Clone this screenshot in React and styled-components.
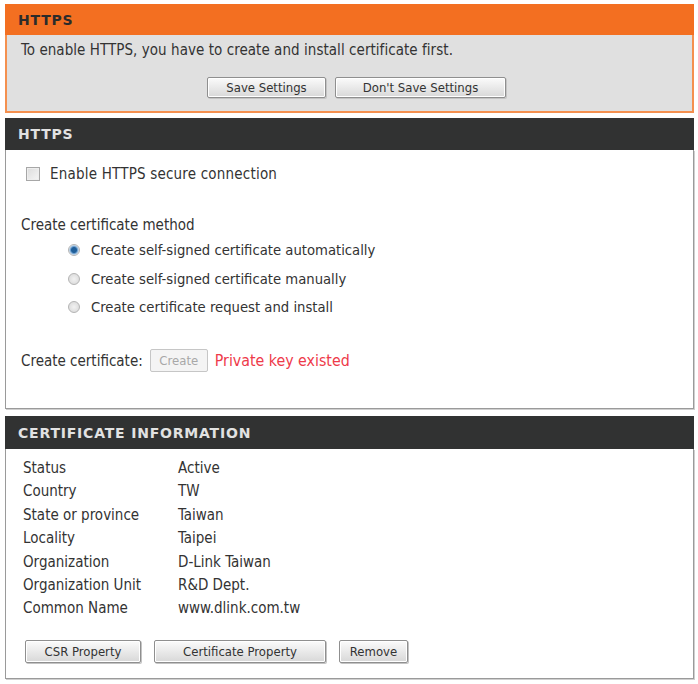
import React from "react";
import styled, { createGlobalStyle } from "styled-components";

const Global = createGlobalStyle`
  html, body { margin: 0; padding: 0; background: #ffffff; }
  body { font-family: "DejaVu Sans Condensed", "DejaVu Sans", Tahoma, sans-serif; color: #333; }
`;

const Page = styled.div`
  width: 698px;
  height: 684px;
  box-sizing: border-box;
  padding: 4px 4px 0 5px;
  display: flex;
  flex-direction: column;
  gap: 5px;
`;

const Panel = styled.section`
  display: flex;
  flex-direction: column;
  margin-top: ${(p) => p.$mt || 0}px;
`;

const Header = styled.div`
  height: ${(p) => p.$h || 32}px;
  box-sizing: border-box;
  display: flex;
  align-items: center;
  padding-left: 13px;
  background: ${(p) => (p.$orange ? "#f36f21" : "#313232")};
  color: ${(p) => (p.$orange ? "#2b2b2b" : "#e2e2e2")};
  font-family: "DejaVu Sans", Verdana, sans-serif;
  font-weight: bold;
  font-size: 14px;
  letter-spacing: 0.8px;
`;

const Body = styled.div`
  box-sizing: border-box;
  height: ${(p) => p.$h}px;
  background: ${(p) => (p.$orange ? "#e0e0e0" : "#ffffff")};
  border: ${(p) => (p.$orange ? "2px solid #f4904f" : "1px solid #9a9a9a")};
  border-top: none;
  box-shadow: ${(p) => (p.$orange ? "none" : "1px 1px 0 #cfcfcf")};
  display: flex;
  flex-direction: column;
  padding: ${(p) => p.$pad};
  font-size: 15px;
`;

const Line = styled.div`
  font-size: 15px;
  line-height: 18px;
  letter-spacing: ${(p) => p.$ls || 0}px;
  padding-left: ${(p) => p.$pl || 0}px;
  margin-top: ${(p) => p.$mt || 0}px;
  color: #333;
`;

const ButtonRow = styled.div`
  display: flex;
  gap: ${(p) => p.$gap || 9}px;
  justify-content: ${(p) => (p.$center ? "center" : "flex-start")};
  margin-top: ${(p) => p.$mt || 0}px;
  padding-left: ${(p) => p.$pl || 0}px;
`;

const Btn = styled.button`
  width: ${(p) => p.$w}px;
  height: ${(p) => p.$hh || 21}px;
  box-sizing: border-box;
  border: 1px solid #8f8f8f;
  border-radius: 2px;
  background: linear-gradient(#fbfbfb, #e6e6e6 60%, #d8d8d8);
  box-shadow: inset 0 0 0 1px #ffffff, 1px 1px 0 #c4c4c4;
  font-family: "DejaVu Sans Condensed", "DejaVu Sans", sans-serif;
  font-size: 13px;
  color: #333;
  padding: 0;
  cursor: pointer;
`;

const DisabledBtn = styled.button`
  width: 58px;
  height: 23px;
  box-sizing: border-box;
  border: 1px solid #c6c6c6;
  border-radius: 2px;
  background: #f4f4f4;
  color: #a8a8a8;
  font-family: "DejaVu Sans Condensed", "DejaVu Sans", sans-serif;
  font-size: 13px;
  padding: 0;
`;

const CheckRow = styled.label`
  display: flex;
  align-items: center;
  gap: 10px;
  padding-left: 20px;
  font-size: 15px;
  letter-spacing: 0.2px;
  color: #333;
`;

const Box = styled.span`
  width: 14px;
  height: 14px;
  box-sizing: border-box;
  border: 1px solid #a7a7a7;
  background: linear-gradient(135deg, #dcdcdc, #f6f6f6);
  box-shadow: inset 0 0 0 1px #eeeeee;
`;

const RadioList = styled.div`
  display: flex;
  flex-direction: column;
  gap: 10.5px;
  padding-left: 62px;
  margin-top: 7px;
`;

const RadioRow = styled.label`
  display: flex;
  align-items: center;
  gap: 11px;
  font-size: 14.7px;
  line-height: 18px;
  color: #333;
`;

const Radio = styled.span`
  width: 12px;
  height: 12px;
  border-radius: 50%;
  box-sizing: border-box;
  border: 1px solid #b4b4b4;
  background: ${(p) =>
    p.$on
      ? "radial-gradient(circle, #1f5f9a 0 2.5px, #6fa0cf 3.5px, #dde8f2 5px)"
      : "radial-gradient(circle, #f2f2f2, #d6d6d6)"};
`;

const CreateRow = styled.div`
  display: flex;
  align-items: center;
  gap: 7px;
  margin-top: 33px;
  padding-left: 15px;
  font-size: 15px;
`;

const Red = styled.span`
  color: #ee3a4a;
  font-size: 15.8px;
`;

const InfoGrid = styled.div`
  display: grid;
  grid-template-columns: 155px 1fr;
  row-gap: 5.4px;
  padding-left: 17px;
  font-size: 15px;
  line-height: 18px;
  color: #333;
`;

const info = [
  ["Status", "Active"],
  ["Country", "TW"],
  ["State or province", "Taiwan"],
  ["Locality", "Taipei"],
  ["Organization", "D-Link Taiwan"],
  ["Organization Unit", "R&D Dept."],
  ["Common Name", "www.dlink.com.tw"],
];

export default function App() {
  return (
    <>
      <Global />
      <Page>
        <Panel>
          <Header $orange $h={31}>HTTPS</Header>
          <Body $orange $h={78} $pad="6px 0 0 14px">
            <Line $ls={0.05}>To enable HTTPS, you have to create and install certificate first.</Line>
            <ButtonRow $center $mt={18}>
              <Btn $w={119}>Save Settings</Btn>
              <Btn $w={171}>Don't Save Settings</Btn>
            </ButtonRow>
          </Body>
        </Panel>

        <Panel>
          <Header $h={32}>HTTPS</Header>
          <Body $h={259} $pad="15px 0 0 0">
            <CheckRow>
              <Box />
              Enable HTTPS secure connection
            </CheckRow>
            <Line $mt={33} $pl={15}>Create certificate method</Line>
            <RadioList>
              <RadioRow>
                <Radio $on />
                Create self-signed certificate automatically
              </RadioRow>
              <RadioRow>
                <Radio />
                Create self-signed certificate manually
              </RadioRow>
              <RadioRow>
                <Radio />
                Create certificate request and install
              </RadioRow>
            </RadioList>
            <CreateRow>
              <span>Create certificate:</span>
              <DisabledBtn disabled>Create</DisabledBtn>
              <Red>Private key existed</Red>
            </CreateRow>
          </Body>
        </Panel>

        <Panel $mt={2}>
          <Header $h={33}>CERTIFICATE INFORMATION</Header>
          <Body $h={230} $pad="10px 0 0 0">
            <InfoGrid>
              {info.map(([k, v]) => (
                <React.Fragment key={k}>
                  <span>{k}</span>
                  <span>{v}</span>
                </React.Fragment>
              ))}
            </InfoGrid>
            <ButtonRow $gap={13} $mt={23} $pl={19}>
              <Btn $w={116} $hh={23}>CSR Property</Btn>
              <Btn $w={172} $hh={23}>Certificate Property</Btn>
              <Btn $w={69} $hh={23}>Remove</Btn>
            </ButtonRow>
          </Body>
        </Panel>
      </Page>
    </>
  );
}
